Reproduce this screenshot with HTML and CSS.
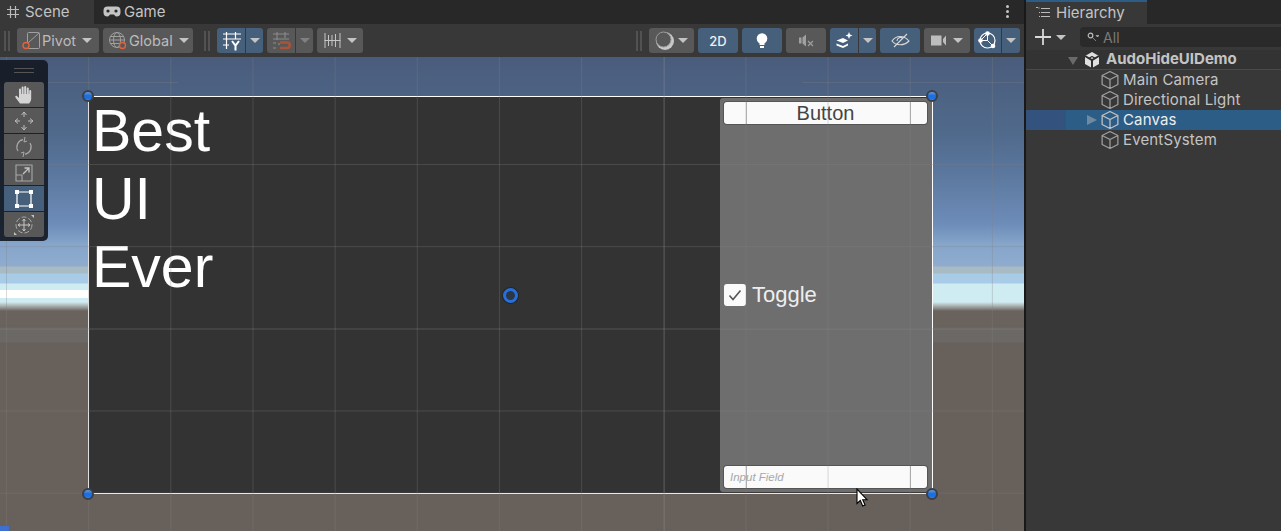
FILE: index.html
```html
<!DOCTYPE html>
<html lang="en">
<head>
  <meta charset="UTF-8" />
  <title>Scene</title>
  <link rel="stylesheet" href="styles.css">
</head>
<body>

  <svg class="defs" width="0" height="0">
    <symbol id="cube" viewBox="1.500 1 15 16">
      <path d="M9 1.500 16 5v8l-7 3.500L2 13V5zM2 5l7 3.500L16 5M9 8.500v8" fill="none" stroke="currentColor" stroke-width="1.100" stroke-linejoin="round" />
    </symbol>
  </svg>

  <main class="editor">

    <!-- scene window -->
    <section class="scene-window">
      <div class="tabs">
        <div class="tab tab-active">
          <svg class="tab-icon" width="12" height="12" viewBox="0 0 12 12"><path d="M3.500 0v12M8.500 0v12M0 3.500h12M0 8.500h12" stroke="#bbb" stroke-width="1.200" /></svg>
          <span>Scene</span>
        </div>
        <div class="tab">
          <svg class="tab-icon" width="18" height="11" viewBox="0 0 18 11"><path d="M4.500.5h9a4 4 0 0 1 4 4v2a4 4 0 0 1-4 4c-1.500 0-2-2-3-2h-3c-1 0-1.500 2-3 2a4 4 0 0 1-4-4v-2a4 4 0 0 1 4-4z" fill="#c4c4c4" /><circle cx="5" cy="5" r="1.600" fill="#282828" /><circle cx="13" cy="5" r="1.600" fill="#282828" /></svg>
          <span>Game</span>
        </div>
        <div class="tab-menu"><i></i><i></i><i></i></div>
      </div>

      <div class="toolbar">
        <div class="grip"></div>
        <button class="tool tool-text w82">
          <svg width="18" height="20" viewBox="0 0 18 20"><rect x="5.500" y="1.500" width="12" height="16" rx="1" fill="none" stroke="#a0a0a0" /><path d="M6 12 17 2" stroke="#a0a0a0" /><circle cx="4" cy="14.500" r="3" fill="#585858" stroke="#e0633c" stroke-width="1.400" /></svg>
          <span>Pivot</span><b class="caret"></b>
        </button>
        <button class="tool tool-text w90">
          <svg width="19" height="20" viewBox="0 0 19 20"><circle cx="9" cy="9" r="7.500" fill="none" stroke="#a0a0a0" /><ellipse cx="9" cy="9" rx="3.500" ry="7.500" fill="none" stroke="#a0a0a0" /><path d="M1.500 9h15M2.500 5.500h13M2.500 12.500h13" stroke="#a0a0a0" /><circle cx="14.500" cy="14.500" r="3" fill="#585858" stroke="#e0633c" stroke-width="1.400" /></svg>
          <span>Global</span><b class="caret"></b>
        </button>
        <div class="grip grip-mid"></div>
        <div class="split">
          <button class="tool on w28">
            <svg width="20" height="20" viewBox="0 0 20 20"><path d="M5.500 1v17M14.500 1v7M2 3h18M2 8h18M2 14h6" stroke="#fff" stroke-width="1.200" fill="none" /><path d="M11 10l3.500 4.500L18 10M14.500 14v5.500" stroke="#fff" stroke-width="2" fill="none" /></svg>
          </button>
          <button class="tool on w17"><b class="caret"></b></button>
        </div>
        <div class="split">
          <button class="tool w28">
            <svg width="20" height="20" viewBox="0 0 20 20"><path d="M6 1v8M14 1v6M2 3h16M2 8h16M2 12h3M2 17h3M8 12v2" stroke="#8c8c8c" stroke-width="1.100" fill="none" /><path d="M9 11.500h7a2.500 2.500 0 0 1 0 5.500H9" fill="none" stroke="#a8543a" stroke-width="2.600" /></svg>
          </button>
          <button class="tool w17"><b class="caret caret-dim"></b></button>
        </div>
        <button class="tool w46">
          <svg width="17" height="17" viewBox="0 0 17 17"><path d="M1 1v15M16 1v15M0.500 8.500h16M4.500 3v11M8 3v11M11.500 2v13" stroke="#c4c4c4" stroke-width="1" /></svg>
          <b class="caret"></b>
        </button>

        <div class="toolbar-gap"></div>

        <div class="grip"></div>
        <button class="tool w45 shading">
          <svg width="20" height="20" viewBox="0 0 20 20"><circle cx="10" cy="10" r="9" fill="#c8c8c8" /><circle cx="8.500" cy="8.500" r="7.500" fill="#585858" stroke="#9a9a9a" /></svg>
          <b class="caret"></b>
        </button>
        <button class="tool on w40 label-2d">2D</button>
        <button class="tool on w40">
          <svg width="12" height="16" viewBox="0 0 12 16"><circle cx="6" cy="5.500" r="5.300" fill="#fff" /><path d="M3.500 10h5v2h-5zM4 13h4v2H4z" fill="#fff" /></svg>
        </button>
        <button class="tool w40">
          <svg width="15" height="13" viewBox="0 0 15 13"><path d="M0 3.500h2.500v6H0zM3.500 3.500 7 .5v12l-3.500-3z" fill="#a0a0a0" /><path d="M9 7l5 5M14 7l-5 5" stroke="#a0a0a0" stroke-width="1.100" /></svg>
        </button>
        <div class="split">
          <button class="tool on w28">
            <svg width="17" height="17" viewBox="0 0 17 17"><path d="M0.500 8.500 7 6l5 2.500L7 11zM0.500 11.500 7 14l5-2.500v2L7 16 .5 13.500z" fill="#fff" /><path d="M13 0l1 2.500L16.500 3.500 14 4.500 13 7 12 4.500 9.500 3.500 12 2.500z" fill="#fff" /></svg>
          </button>
          <button class="tool on w17"><b class="caret"></b></button>
        </div>
        <button class="tool on w40">
          <svg width="19" height="15" viewBox="0 0 19 15"><path d="M1 8c4-6 12-6 17 0-5 5-13 5-17 0z" fill="none" stroke="#d8d8d8" stroke-width="1.100" /><path d="M6 8a3.500 3.500 0 0 1 6-2.500M3 14 16 1" stroke="#d8d8d8" stroke-width="1.100" fill="none" /></svg>
        </button>
        <button class="tool w46">
          <svg width="16" height="11" viewBox="0 0 16 11"><path d="M0 .5h10.500v10H0zM12 4l3-3.500v10L12 7z" fill="#bdbdbd" /></svg>
          <b class="caret"></b>
        </button>
        <div class="split">
          <button class="tool on w27">
            <svg width="19" height="19" viewBox="0 0 19 19"><circle cx="9.500" cy="9.500" r="7.500" fill="none" stroke="#fff" stroke-width="1.200" /><path d="M9.500 2.500 2.500 9.500M9.500 2.500v7M2.500 9.500h7L15 15" stroke="#fff" fill="none" /><circle cx="9.500" cy="2.500" r="2.300" fill="#fff" /><circle cx="2.500" cy="9.500" r="2.300" fill="#fff" /><circle cx="15" cy="15" r="2.300" fill="#fff" /></svg>
          </button>
          <button class="tool on w18"><b class="caret"></b></button>
        </div>
      </div>

      <div class="viewport">
        <div class="sky-glow"></div>

        <!-- ui canvas, placed in scene coordinates -->
        <div class="ui-canvas">
          <div class="big-text">
            <div>Best</div>
            <div>UI</div>
            <div>Ever</div>
          </div>
          <div class="ui-panel">
            <div class="ui-button">Button</div>
            <div class="ui-toggle">
              <div class="ui-check">
                <svg width="14" height="12" viewBox="0 0 14 12"><path d="M1.500 6.500 5 10.500 12.500 1.500" fill="none" stroke="#555" stroke-width="1.600" /></svg>
              </div>
              <span>Toggle</span>
            </div>
            <div class="ui-input">Input Field</div>
          </div>
        </div>

        <div class="scene-grid"></div>

        <div class="handle handle-tl"></div>
        <div class="handle handle-tr"></div>
        <div class="handle handle-bl"></div>
        <div class="handle handle-br"></div>
        <div class="pivot"></div>

        <div class="toolbox">
          <div class="toolbox-grip"></div>
          <button class="box-tool">
            <svg width="20" height="20" viewBox="0 0 20 20"><path d="M6 18.500 1.500 12.500c-.8-1.200.6-2.300 1.600-1.300L5 13V4.500a1 1 0 0 1 2 0V9h.6V2.500a1 1 0 0 1 2 0V9h.6V2a1 1 0 0 1 2 0v7h.6V3.500a1 1 0 0 1 2 0V9h.4V6a1 1 0 0 1 2 0v7.500c0 2-1 3.500-2 5z" fill="#d4d4d4" /></svg>
          </button>
          <button class="box-tool">
            <svg width="20" height="20" viewBox="0 0 20 20"><path d="M10 1v5M10 14v5M1 10h5M14 10h5M10 1 7.500 4M10 1l2.500 3M10 19l-2.500-3M10 19l2.500-3M1 10l3-2.500M1 10l3 2.500M19 10l-3-2.500M19 10l-3 2.500" fill="none" stroke="#bdbdbd" stroke-width="1" /></svg>
          </button>
          <button class="box-tool">
            <svg width="20" height="20" viewBox="0 0 20 20"><path d="M4 14A7.500 7.500 0 0 1 9 2.700M16 6A7.500 7.500 0 0 1 11 17.300" fill="none" stroke="#a8a8a8" stroke-width="1.200" /><path d="M11 0l-1 5 3-1M9 20l1-5-3 1" fill="none" stroke="#a8a8a8" /></svg>
          </button>
          <button class="box-tool">
            <svg width="18" height="18" viewBox="0 0 18 18"><path d="M1 1h16v16H1zM1 11h6v6" fill="none" stroke="#a8a8a8" stroke-width="1.100" /><path d="M8 10l6-6M9.500 4H14v4.500" fill="none" stroke="#c4c4c4" stroke-width="1.300" /></svg>
          </button>
          <button class="box-tool box-tool-on">
            <svg width="18" height="18" viewBox="0 0 18 18"><path d="M2 2h14v14H2z" fill="none" stroke="#fff" stroke-width="1.200" /><path d="M0 0h4v4H0zM14 0h4v4h-4zM0 14h4v4H0zM14 14h4v4h-4z" fill="#fff" /></svg>
          </button>
          <button class="box-tool">
            <svg width="20" height="20" viewBox="0 0 20 20"><circle cx="10" cy="10" r="8" fill="none" stroke="#a8a8a8" stroke-dasharray="5 2" /><path d="M10 4v12M4 10h12M10 4 8.500 6M10 4l1.500 2M10 16l-1.500-2M10 16l1.500-2M4 10l2-1.500M4 10l2 1.500M16 10l-2-1.500M16 10l-2 1.500" fill="none" stroke="#c4c4c4" /><path d="M0 20v-3l3 3zM20 0v3l-3-3z" fill="#c4c4c4" /></svg>
          </button>
        </div>

        <svg class="cursor" width="13" height="20" viewBox="0 0 13 20"><path d="M1 1v14.500l3.300-3 2.400 5.500 2.400-1-2.400-5.300H11z" fill="#fff" stroke="#000" stroke-width="1.100" /></svg>
        <div class="corner-tag"></div>
      </div>
    </section>

    <!-- hierarchy window -->
    <aside class="hierarchy">
      <div class="tabs">
        <div class="tab tab-hierarchy">
          <svg class="tab-icon" width="14" height="11" viewBox="0 0 14 11"><path d="M0 .5h2M2.500 1h1M5 1.500h9M5 5.500h9M5 9.500h9M3 5.500h1M3 9.500h1" stroke="#bbb" stroke-width="1.100" /></svg>
          <span>Hierarchy</span>
        </div>
      </div>
      <div class="hier-tools">
        <svg width="16" height="16" viewBox="0 0 16 16"><path d="M8 0v16M0 8h16" stroke="#d8d8d8" stroke-width="1.800" /></svg>
        <b class="caret"></b>
        <div class="search">
          <svg width="12" height="10" viewBox="0 0 12 10"><circle cx="3.500" cy="3.500" r="2.300" fill="none" stroke="#bbb" stroke-width="1.200" /><path d="M5.500 5.500 9 9M9 3.500l1.500 1.500L12 3.500z" stroke="#bbb" fill="#bbb" stroke-width=".6" /></svg>
          <span>All</span>
        </div>
      </div>
      <div class="tree">
        <div class="row row-scene">
          <b class="tree-arrow tree-arrow-open"></b>
          <svg class="row-icon" viewBox="1 0 16 18"><path d="M9 1 16 5v8l-7 4-7-4V5z" fill="#e0e0e0" /><path d="M9 9.200V17M9 9.200 2 5M9 9.200 16 5" stroke="#2f2f2f" stroke-width="2" /><path d="M9 5.500l-3 1.700M9 5.500l3 1.700" stroke="#2f2f2f" stroke-width="1.300" /></svg>
          <span>AudoHideUIDemo</span>
        </div>
        <div class="row"><svg class="row-icon"><use href="#cube" /></svg><span>Main Camera</span></div>
        <div class="row"><svg class="row-icon"><use href="#cube" /></svg><span>Directional Light</span></div>
        <div class="row row-selected">
          <b class="tree-arrow"></b>
          <svg class="row-icon"><use href="#cube" /></svg><span>Canvas</span>
        </div>
        <div class="row"><svg class="row-icon"><use href="#cube" /></svg><span>EventSystem</span></div>
      </div>
    </aside>

  </main>

</body>
</html>
```

FILE: styles.css
```css
* {
  box-sizing: border-box;
}

html, body {
  margin: 0;
  height: 100%;
  overflow: hidden;
}

body {
  font-family: "Inter", "Liberation Sans", sans-serif;
  font-size: 15px;
  letter-spacing: .15px;
  color: #c4c4c4;
  background: #191919;
}

.defs {
  position: absolute;
}

.editor {
  display: flex;
  height: 531px;
  gap: 2px;
}

.scene-window {
  width: 1024px;
  display: flex;
  flex-direction: column;
}

.hierarchy {
  flex: 1;
  background: #383838;
}

/* tabs */
.tabs {
  height: 24px;
  display: flex;
  background: #282828;
}

.tab {
  display: flex;
  align-items: center;
  gap: 6px;
  padding-left: 7px;
  padding-bottom: 1px;
  width: 94px;
  font-size: 15px;
  letter-spacing: 0;
}

.tab-active {
  background: #383838;
}

.tab + .tab {
  padding-left: 9px;
  gap: 3px;
}

.tab-menu {
  margin-left: auto;
  margin-right: 15px;
  padding-top: 5px;
  display: flex;
  flex-direction: column;
  gap: 2px;
}

.tab-menu i {
  width: 3px;
  height: 3px;
  background: #c4c4c4;
  border-radius: 50%;
}

.tab-hierarchy {
  width: 121px;
  padding-left: 10px;
  padding-bottom: 2px;
  background: #383838;
  border-top: 2px solid #2c5d87;
}

/* toolbar */
.toolbar {
  height: 33px;
  background: #383838;
  display: flex;
  align-items: center;
  gap: 4px;
  padding: 0 4px;
}

.grip {
  width: 6px;
  height: 20px;
  margin-right: 3px;
  border-left: 2px solid #525252;
  border-right: 2px solid #525252;
}

.grip-mid {
  margin: 0 3px 0 7px;
}

.toolbar-gap {
  flex: 1;
}

.tool {
  height: 25px;
  padding: 0;
  border: 0;
  border-radius: 3px;
  background: #585858;
  color: #d8d8d8;
  font: inherit;
  display: flex;
  align-items: center;
  justify-content: center;
  gap: 6px;
}

.tool-text {
  justify-content: flex-start;
  padding-left: 5px;
  gap: 2px;
  font-size: 14.5px;
  color: #bcbcbc;
}

.tool-text .caret {
  margin-left: 4px;
}

.on {
  background: #46607c;
}

.w17 { width: 17px; }
.w18 { width: 18px; }
.w27 { width: 27px; }
.w28 { width: 28px; }
.w40 { width: 40px; }
.w45 { width: 45px; }
.w46 { width: 46px; }
.w82 { width: 82px; }
.w90 { width: 90px; }

.shading {
  gap: 3px;
}

.label-2d {
  font-size: 13px;
  font-weight: 500;
  color: #eee;
}

.split {
  display: flex;
  gap: 1px;
}

.split .tool:first-child {
  border-radius: 3px 0 0 3px;
}

.split .tool:last-child {
  border-radius: 0 3px 3px 0;
}

.caret {
  width: 0;
  height: 0;
  border-left: 5px solid transparent;
  border-right: 5px solid transparent;
  border-top: 5.500px solid #c4c4c4;
}

.caret-dim {
  border-top-color: #808080;
}

/* scene view */
.viewport {
  position: relative;
  flex: 1;
  overflow: hidden;
  background: linear-gradient(to bottom,
    #4a5c7c 0,
    #506a8c 77px,
    #5a769c 113px,
    #6d8cb8 167px,
    #86a5ca 187px,
    #8faccf 209px,
    #a8bac4 210px,
    #a8bac4 216px,
    #a8cbe8 217px,
    #a8cbe8 226px,
    #cfecf3 227px,
    #cfecf3 245px,
    #a8b0ae 249px,
    #6a625d 254px,
    #6a625d 270px,
    #6b6865 271px,
    #6b6865 285px,
    #68605b 286px,
    #68605b 100%);
}

.sky-glow {
  position: absolute;
  left: 0;
  top: 233px;
  width: 88px;
  height: 8px;
  background: #fff;
}

.scene-grid {
  position: absolute;
  inset: 0;
  pointer-events: none;
  background-image:
    linear-gradient(to right, rgba(150, 150, 150, .22) 1px, transparent 1px),
    linear-gradient(to right, rgba(128, 128, 128, .3) 1px, transparent 1px),
    linear-gradient(rgba(128, 128, 128, .3), rgba(128, 128, 128, .3)),
    linear-gradient(rgba(128, 128, 128, .3), rgba(128, 128, 128, .3));
  background-size: 100% 100%, 82.17px 100%, 130px 1px, 222px 1px;
  background-position: 664px 0, 6px 0, 48px 25px, 802px 25px;
  background-repeat: no-repeat, repeat, no-repeat, no-repeat;
}

/* the horizontal lines below the partial top one */
.scene-grid::after {
  content: "";
  position: absolute;
  left: 0;
  right: 0;
  top: 107px;
  bottom: 0;
  background-image:
    linear-gradient(to bottom, rgba(150, 150, 150, .1) 1px, transparent 1px),
    linear-gradient(to bottom, rgba(128, 128, 128, .3) 1px, transparent 1px);
  background-size: 100% 100%, 100% 82.17px;
  background-position: 0 165px, 0 0;
  background-repeat: no-repeat, repeat;
}

.ui-canvas {
  position: absolute;
  left: 88px;
  top: 39px;
  width: 845px;
  height: 398px;
  background: #333;
  border: 1px solid #fff;
  padding: 0 0 0 3px;
  display: flex;
  justify-content: space-between;
}

.big-text {
  font-family: "Liberation Sans", sans-serif;
  font-size: 59px;
  line-height: 68px;
  letter-spacing: 0;
  color: #fff;
}

.ui-panel {
  width: 212px;
  margin: 1px 0 1px;
  padding: 4px 5px 4px 4px;
  background: #6e6e6e;
  border-radius: 3px 0 0 3px;
  display: flex;
  flex-direction: column;
  justify-content: space-between;
  font-family: "Liberation Sans", sans-serif;
  letter-spacing: 0;
}

.ui-button,
.ui-input {
  height: 22px;
  line-height: 22px;
  background-color: #fafafa;
  background-image:
    linear-gradient(to right, #b8b8b8 1px, transparent 1px),
    linear-gradient(to right, #b8b8b8 1px, transparent 1px);
  background-size: 100% 100%;
  background-position: 22px 0, 186px 0;
  background-repeat: no-repeat;
  border-radius: 3px;
  box-shadow: 0 0 0 1px rgba(40, 40, 40, .35);
}

.ui-button {
  text-align: center;
  font-size: 20px;
  color: #444;
}

.ui-toggle {
  display: flex;
  align-items: center;
  gap: 6px;
  font-size: 22px;
  color: #eee;
}

.ui-check {
  width: 22px;
  height: 22px;
  background: #fafafa;
  border-radius: 3px;
  display: flex;
  align-items: center;
  justify-content: center;
}

.ui-input {
  padding-left: 6px;
  font-size: 11.500px;
  font-style: italic;
  color: #a8a8a8;
}

.handle {
  position: absolute;
  width: 12px;
  height: 12px;
  border-radius: 50%;
  background: linear-gradient(to bottom, #6a9ad8 0, #1c6fe0 45%, #1c6fe0 80%, #4a86d8 100%);
  border: 2px solid #3a3f48;
}

.handle-tl { left: 82px; top: 33px; }
.handle-tr { left: 926px; top: 33px; }
.handle-bl { left: 82px; top: 431px; }
.handle-br { left: 926px; top: 431px; }

.pivot {
  position: absolute;
  left: 503px;
  top: 231px;
  width: 15px;
  height: 15px;
  border-radius: 50%;
  border: 3px solid #2870d8;
  background: #2c3644;
  box-shadow: 0 0 0 1px rgba(20, 30, 40, .6);
}

.toolbox {
  position: absolute;
  left: 0;
  top: 3px;
  width: 48px;
  height: 181px;
  padding: 0 4px;
  background: rgba(20, 26, 36, .92);
  border-radius: 0 5px 5px 0;
  display: flex;
  flex-direction: column;
  gap: 1px;
}

.toolbox-grip {
  height: 21px;
  margin: 0 10px;
  flex: none;
  background: linear-gradient(#555, #555) 0 8px / 100% 1px no-repeat,
    linear-gradient(#555, #555) 0 12px / 100% 1px no-repeat;
}

.box-tool {
  height: 25px;
  flex: none;
  padding: 0;
  border: 0;
  background: #585858;
  display: flex;
  align-items: center;
  justify-content: center;
}

.box-tool:first-of-type {
  border-radius: 3px 3px 0 0;
}

.box-tool:last-of-type {
  border-radius: 0 0 3px 3px;
}

.box-tool-on {
  background: #46607c;
}

.cursor {
  position: absolute;
  left: 856px;
  top: 431px;
}

.corner-tag {
  position: absolute;
  left: 0;
  bottom: 0;
  width: 9px;
  height: 5px;
  background: #3f6fd0;
}

/* hierarchy */
.hier-tools {
  height: 26px;
  display: flex;
  align-items: center;
  padding-left: 9px;
  gap: 5px;
}

.search {
  flex: 1;
  height: 20px;
  margin-left: 9px;
  padding-left: 7px;
  background: #2a2a2a;
  border-radius: 4px 0 0 4px;
  display: flex;
  align-items: center;
  gap: 4px;
  font-size: 14px;
  color: #7a7a7a;
}

.row {
  height: 20px;
  display: flex;
  align-items: center;
  padding-left: 75px;
  gap: 4px;
  position: relative;
}

.row span {
  padding-bottom: 2px;
}

.row-icon {
  width: 18px;
  height: 18px;
  flex: none;
  color: #a0a0a0;
}

.row-scene {
  padding-left: 42px;
  gap: 0;
  font-weight: 700;
  color: #c4c4c4;
  background: #333;
  border-bottom: 1px solid #4a4a4a;
  letter-spacing: 0;
}

.row-scene .row-icon {
  width: 16px;
  margin: 0 6px;
  color: #ddd;
}

.row-selected {
  color: #eee;
  background: linear-gradient(to right, #33527d 40px, #2c5d87 40px);
}

.row-selected .row-icon {
  color: #c4c4c4;
}

.tree-arrow {
  width: 0;
  height: 0;
  position: absolute;
  left: 61px;
  border-top: 5px solid transparent;
  border-bottom: 5px solid transparent;
  border-left: 10px solid #6f8aa0;
}

.row-scene .tree-arrow-open {
  position: static;
  border-left: 5.500px solid transparent;
  border-right: 5.500px solid transparent;
  border-top: 8px solid #6a6a6a;
  border-bottom: 0;
  margin-top: 2px;
}
```
